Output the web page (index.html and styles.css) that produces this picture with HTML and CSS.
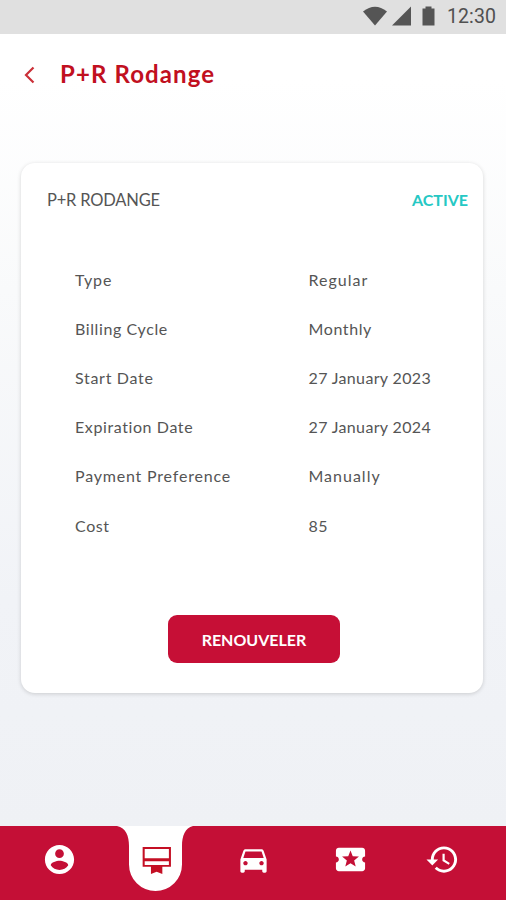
FILE: index.html
```html
<!DOCTYPE html>
<html lang="en">
<head>
    <meta charset="UTF-8">
    <meta name="viewport" content="width=device-width, initial-scale=1.0">
    <title>P+R Rodange</title>
    <link rel="stylesheet" href="styles.css">
</head>
<body>
    <div class="status-bar">
        <svg class="status-icons" width="76" height="22" viewBox="0 0 76 22">
            <path d="M0 6.500Q12-3 24 6.500L12 20.500z"/>
            <path d="M48 1.500v19H29z"/>
            <path d="M59.500 3.500h3v-2h6v2h3v17h-12z"/>
        </svg>
        <span class="clock">12:30</span>
    </div>

    <header class="header">
        <svg class="back" width="12" height="18" viewBox="0 0 12 18">
            <path d="M9.500 1.500L2 9l7.500 7.500"/>
        </svg>
        <h1>P+R Rodange</h1>
    </header>

    <main class="card">
        <div class="card-header">
            <span class="card-title">P+R RODANGE</span>
            <span class="card-status">ACTIVE</span>
        </div>
        <dl class="details">
            <dt class="type">Type</dt>
            <dd class="regular">Regular</dd>
            <dt class="cycle">Billing Cycle</dt>
            <dd class="monthly">Monthly</dd>
            <dt class="start">Start Date</dt>
            <dd class="date">27 January 2023</dd>
            <dt class="expiration">Expiration Date</dt>
            <dd class="date">27 January 2024</dd>
            <dt class="payment">Payment Preference</dt>
            <dd class="manually">Manually</dd>
            <dt class="cost">Cost</dt>
            <dd class="amount">85</dd>
        </dl>
        <button class="renew">RENOUVELER</button>
    </main>

    <nav class="nav">
        <svg class="nav-tab" width="78" height="66" viewBox="0 0 78 66">
            <path d="M0 0C9 2 12 10 12 20V38.500a26.500 26.500 0 0 0 53 0V20C65 10 68 2 76 0z"/>
        </svg>
        <svg class="icon" viewBox="0 0 24 24">
            <path d="M12 2C6.480 2 2 6.480 2 12s4.480 10 10 10 10-4.480 10-10S17.520 2 12 2zm0 3c1.660 0 3 1.340 3 3s-1.340 3-3 3-3-1.340-3-3 1.340-3 3-3zm0 14.200c-2.500 0-4.710-1.280-6-3.220.030-1.990 4-3.080 6-3.080 1.990 0 5.970 1.090 6 3.080-1.290 1.940-3.500 3.220-6 3.220z"/>
        </svg>
        <svg class="icon active" viewBox="0 0 24 24">
            <path fill-rule="evenodd" d="M2.500 3.400h19.400v13.600H16v5l-3.900-1.600L8.200 22v-5H2.500zM3.900 4.800v6.400h16.600V4.800zM3.900 13.200v2.500h16.600v-2.500z"/>
        </svg>
        <svg class="icon" viewBox="0 0 24 24">
            <path d="M18.920 6.010C18.720 5.420 18.160 5 17.500 5h-11c-.660 0-1.210.420-1.420 1.010L3 12v8c0 .550.450 1 1 1h1c.550 0 1-.450 1-1v-1h12v1c0 .550.450 1 1 1h1c.550 0 1-.450 1-1v-8l-2.080-5.990zM6.500 16c-.830 0-1.500-.670-1.500-1.500S5.670 13 6.500 13s1.500.670 1.500 1.500S7.330 16 6.500 16zm11 0c-.830 0-1.500-.670-1.500-1.500s.670-1.500 1.500-1.500 1.500.670 1.500 1.500-.670 1.500-1.500 1.500zM5 11l1.500-4.500h11L19 11H5z"/>
        </svg>
        <svg class="icon" viewBox="0 0 24 24">
            <path d="M20 12c0-1.100.900-2 2-2V6c0-1.100-.900-2-2-2H4c-1.100 0-1.990.900-1.990 2v4c1.100 0 1.990.900 1.990 2s-.890 2-2 2v4c0 1.100.900 2 2 2h16c1.100 0 2-.900 2-2v-4c-1.100 0-2-.900-2-2zm-4.420 4.800L12 14.500l-3.580 2.300 1.080-4.120-3.290-2.690 4.240-.250L12 5.800l1.540 3.950 4.240.250-3.290 2.690 1.090 4.110z"/>
        </svg>
        <svg class="icon history" viewBox="0 0 24 24">
            <path d="M13 3c-4.970 0-9 4.030-9 9H1l3.890 3.890.070.140L9 12H6c0-3.870 3.130-7 7-7s7 3.130 7 7-3.130 7-7 7c-1.930 0-3.680-.790-4.940-2.060l-1.420 1.420C8.270 19.990 10.510 21 13 21c4.970 0 9-4.030 9-9s-4.030-9-9-9zm-1 5v5l4.280 2.540.720-1.210-3.500-2.080V8H12z"/>
        </svg>
    </nav>
</body>
</html>
```
FILE: styles.css
```css
* {
    box-sizing: border-box;
}
body {
    display: flex;
    flex-direction: column;
    height: 900px;
    margin: 0;
    font-family: Lato, 'Open Sans', sans-serif;
    color: #555555;
    background: linear-gradient(#ffffff 80px, #f9fafb 290px, #f1f3f7 600px, #eff1f5 826px);
}
.status-bar {
    display: flex;
    justify-content: flex-end;
    height: 34px;
    padding: 5px 10px 0 0;
    background-color: #e0e0e0;
}
.status-icons {
    fill: #555555;
    margin-right: 8px;
}
.clock {
    font: 400 19.5px/23px Roboto, sans-serif;
    letter-spacing: 0.1px;
    color: #505050;
}
.header {
    display: flex;
    align-items: center;
    height: 80px;
    padding-left: 24px;
}
.back {
    fill: none;
    stroke: #cb3038;
    stroke-width: 2.2;
    margin: 2px 24px 0 0;
}
h1 {
    margin: 0;
    font-size: 24px;
    line-height: 30px;
    letter-spacing: 1.1px;
    color: #c1101f;
}
.card {
    display: flex;
    flex-direction: column;
    height: 530px;
    margin: 49px 23px 0 21px;
    background-color: #ffffff;
    border-radius: 14px;
    box-shadow: 0 1px 4px rgba(0, 0, 0, 0.16);
}
.card-header {
    display: flex;
    justify-content: space-between;
    padding: 25px 15px 0 26px;
    font-size: 16.5px;
    line-height: 24px;
}
.card-title {
    letter-spacing: -0.2px;
}
.card-status {
    font-weight: bold;
    font-size: 16px;
    color: #25c8c4;
}
.details {
    display: grid;
    grid-template-columns: 233.5px 1fr;
    grid-auto-rows: 49.2px;
    align-items: center;
    margin: 43px 0 0 54px;
    font-size: 16px;
    line-height: 20px;
    letter-spacing: 0.6px;
}
.details dd {
    margin: 0;
}
.type {
    letter-spacing: 0.9px;
}
.start {
    letter-spacing: 0.7px;
}
.payment {
    letter-spacing: 0.8px;
}
.regular,
.manually {
    letter-spacing: 1px;
}
.date,
.amount {
    letter-spacing: 0.35px;
}
.renew {
    width: 172px;
    height: 48px;
    margin: 65px 0 0 147px;
    padding: 0;
    font: bold 16px Lato, sans-serif;
    color: #ffffff;
    background-color: #c60f36;
    border: none;
    border-radius: 9px;
}
.nav {
    position: relative;
    display: flex;
    gap: 62px;
    height: 74px;
    margin-top: auto;
    padding: 16px 0 0 42px;
    background-color: #c40f36;
}
.nav-tab {
    position: absolute;
    top: 0;
    left: 117px;
    fill: #ffffff;
}
.icon {
    position: relative;
    width: 35px;
    height: 35px;
    fill: #ffffff;
}
.icon.active {
    fill: #c40f24;
}
.icon.history {
    margin-left: -5px;
}
```
